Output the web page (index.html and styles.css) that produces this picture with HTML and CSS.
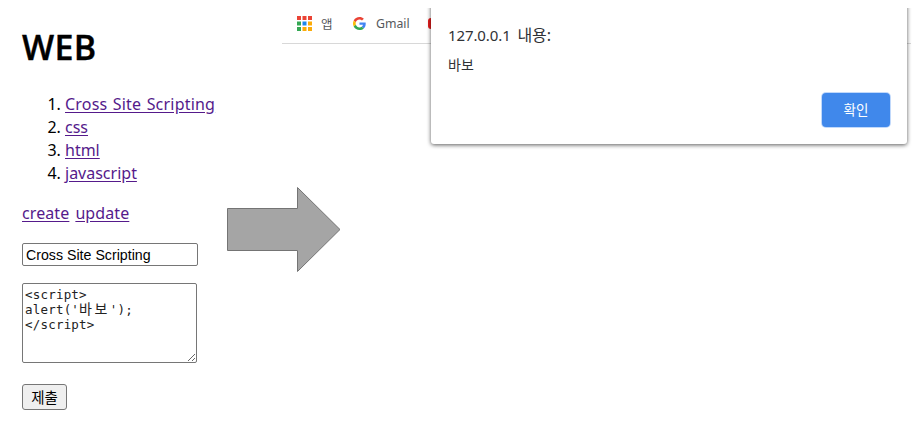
FILE: index.html
```html
<!DOCTYPE html>
<html lang="ko">
<head>
<meta charset="utf-8">
<title>WEB</title>
<link rel="stylesheet" href="styles.css">
</head>
<body>
<div class="stage">
  <main class="page">
    <h1>WEB</h1>
    <ol>
      <li><a class="wide" href="#">Cross Site Scripting</a></li>
      <li><a href="#">css</a></li>
      <li><a href="#">html</a></li>
      <li><a href="#">javascript</a></li>
    </ol>
    <nav><a href="#">create</a><a href="#">update</a></nav>
    <form>
      <input type="text" value="Cross Site Scripting">
      <div class="editor" contenteditable="true" spellcheck="false">&lt;script&gt;
alert('<span>바보</span>');
&lt;/script&gt;</div>
      <button type="button">제출</button>
    </form>
  </main>
  <svg class="arrow" width="115" height="88" viewBox="0 0 115 88"><path d="M.5 22.5H70.5V1.5L113 43.500 70.500 85.500V64.500H.5Z" fill="#a5a5a5" stroke="#747474"/></svg>
  <section class="browser">
    <div class="bookmarks">
      <svg class="apps" width="15" height="15" viewBox="0 0 15 15"><g fill="#ea4335"><path d="M0 0h4v4H0zM5.500 0h4v4h-4zM11 0h4v4h-4z"/></g><path fill="#34a853" d="M0 5.500h4v4H0z"/><path fill="#1a86f0" d="M5.500 5.500h4v4h-4z"/><path fill="#fbab09" d="M11 5.500h4v4h-4zM5.500 11h4v4h-4zM11 11h4v4h-4z"/><path fill="#34a853" d="M0 11h4v4H0z"/></svg>
      <span class="app-label">앱</span>
      <svg class="google" width="13" height="13" viewBox="0 0 48 48"><path fill="#ea4335" d="M24 9.500c3.540 0 6.710 1.220 9.210 3.600l6.850-6.850C35.900 2.380 30.470 0 24 0 14.620 0 6.510 5.380 2.560 13.220l7.980 6.190C12.430 13.720 17.740 9.500 24 9.500z"/><path fill="#4285f4" d="M46.980 24.550c0-1.570-.15-3.090-.38-4.550H24v9.020h12.940c-.58 2.960-2.260 5.480-4.780 7.180l7.730 6c4.510-4.180 7.090-10.360 7.090-17.650z"/><path fill="#fbbc05" d="M10.530 28.590A14.500 14.500 0 0 1 10.530 19.410l-7.980-6.190A24 24 0 0 0 0 24c0 3.880.92 7.540 2.560 10.780z"/><path fill="#34a853" d="M24 48c6.480 0 11.930-2.130 15.890-5.810l-7.730-6c-2.150 1.450-4.920 2.300-8.160 2.300-6.260 0-11.570-4.220-13.470-9.910l-7.980 6.190C6.510 42.620 14.620 48 24 48z"/></svg>
      <span class="gmail">Gmail</span>
      <i class="video"></i>
    </div>
    <div class="dialog">
      <h2>127.0.0.1 <span>내용:</span></h2>
      <p>바보</p>
      <button type="button">확인</button>
    </div>
  </section>
</div>
</body>
</html>
```
FILE: styles.css
```css
* { box-sizing: border-box; }
body {
  margin: 0;
  background: #fff;
  color: #000;
  font-family: "Noto Sans", "Noto Sans CJK KR", sans-serif;
  overflow: hidden;
}
.stage {
  display: grid;
  grid-template-columns: 227px 55px 1fr;
  height: 441px;
}
.page { padding: 26px 0 0 22px; font-size: 16px; }
h1 { margin: 0; font-size: 34px; line-height: 43px; height: 67px; font-weight: 600; font-family: "Open Sans", sans-serif; letter-spacing: .3px; -webkit-text-stroke: .4px #000; }
ol { margin: 0; padding-left: 43px; line-height: 23px; }
a { color: #551a8b; text-decoration: underline; text-underline-offset: 2px; }
.wide { letter-spacing: .2px; word-spacing: 1px; }
nav { display: flex; gap: 6px; margin-top: 17px; line-height: 23px; letter-spacing: .1px; }
form { display: flex; flex-direction: column; align-items: flex-start; }
input {
  width: 176px; height: 23px; margin: 18px 0 17px; padding: 0 3px;
  border: 1px solid #767676; border-radius: 2px;
  font: 14.2px "Liberation Sans", sans-serif;
}
.editor {
  width: 175px; height: 80px; padding: 3px 2px;
  border: 1px solid #767676; border-radius: 2px;
  font: 12.500px/15px "DejaVu Sans Mono", "Noto Sans CJK KR", monospace;
  letter-spacing: .2px; color: #222;
  white-space: pre-wrap; overflow: hidden; resize: both;
}
.editor span { font-size: 14px; line-height: 1px; letter-spacing: 2.500px; }
.page button {
  width: 45px; height: 26px; margin-top: 21px; padding: 0;
  border: 1px solid #767676; border-radius: 3px; background: #efefef;
  font: 14.500px/22px "Noto Sans CJK KR", sans-serif; color: #000;
}
.arrow { grid-column: 2 / 4; grid-row: 1; margin-top: 186px; z-index: 1; }
.browser { grid-column: 3; grid-row: 1; position: relative; margin-top: 8px; overflow: hidden; }
.bookmarks {
  display: flex; align-items: center; height: 36px; width: 629px;
  padding: 0 0 4px 15px; border-bottom: 1px solid #d8d8d8;
  color: #55585b; font-size: 13px;
}
.app-label { margin-left: 9px; width: 13px; font-size: 12.500px; }
.google { margin-left: 19px; }
.gmail { margin-left: 10px; width: 34px; font-size: 12.300px; }
.video { width: 14px; height: 11px; margin-left: 18px; border-radius: 3px; background: #e51d1d; }
.dialog {
  position: absolute; left: 149px; top: -8px; width: 476px; height: 144px;
  padding: 24px 17px 17px; background: #fff; border-radius: 0 0 3px 3px;
  box-shadow: 0 1px 4px rgba(0,0,0,.65);
  display: flex; flex-direction: column; color: #303236;
}
.dialog h2 { margin: 0; font-size: 15px; line-height: 22px; font-weight: 400; letter-spacing: -.1px; }
.dialog h2 span { margin-left: 3px; font-size: 16px; }
.dialog p { margin: 9px 0 0; font-size: 14px; line-height: 20px; }
.dialog button {
  align-self: flex-end; width: 68px; height: 34px; margin-top: 18px; padding: 0 0 3px;
  border: 0; border-radius: 4px; background: #4088eb; color: #fff;
  box-shadow: 0 0 0 1px #c1d9fb;
  font: 13.500px/20px "Noto Sans CJK KR", sans-serif;
}
```
